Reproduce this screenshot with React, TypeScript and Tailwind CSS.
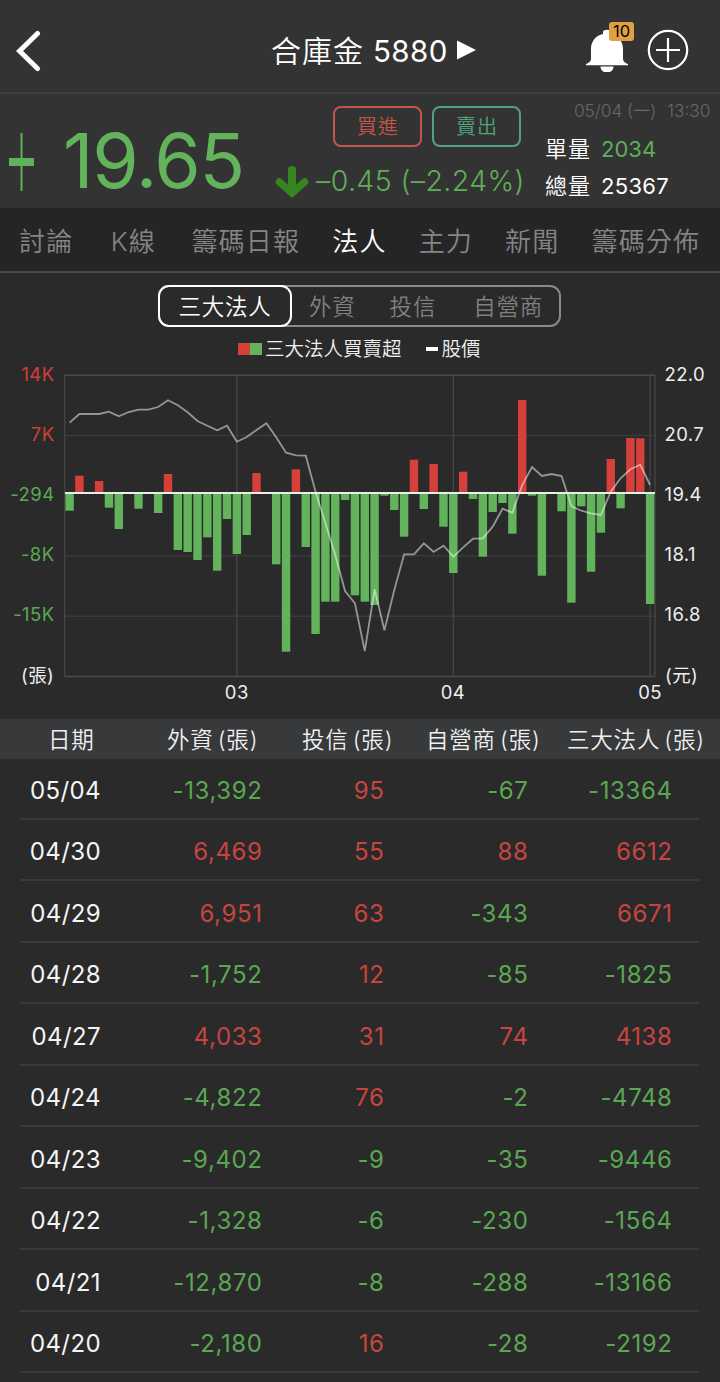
import clsx from 'clsx';

interface Row {
  date: string;
  foreign: string;
  trust: string;
  dealer: string;
  total: string;
}

const tabs = ['討論', 'K線', '籌碼日報', '法人', '主力', '新聞', '籌碼分佈'];

const rows: Row[] = [
  { date: '05/04', foreign: '-13,392', trust: '95', dealer: '-67', total: '-13364' },
  { date: '04/30', foreign: '6,469', trust: '55', dealer: '88', total: '6612' },
  { date: '04/29', foreign: '6,951', trust: '63', dealer: '-343', total: '6671' },
  { date: '04/28', foreign: '-1,752', trust: '12', dealer: '-85', total: '-1825' },
  { date: '04/27', foreign: '4,033', trust: '31', dealer: '74', total: '4138' },
  { date: '04/24', foreign: '-4,822', trust: '76', dealer: '-2', total: '-4748' },
  { date: '04/23', foreign: '-9,402', trust: '-9', dealer: '-35', total: '-9446' },
  { date: '04/22', foreign: '-1,328', trust: '-6', dealer: '-230', total: '-1564' },
  { date: '04/21', foreign: '-12,870', trust: '-8', dealer: '-288', total: '-13166' },
  { date: '04/20', foreign: '-2,180', trust: '16', dealer: '-28', total: '-2192' },
];

// bar ends, measured from the zero line: up is positive
const bars = [
  -17.7, 17.3, 0.5, 12, -14.7, -36, 0, -15.7, 0, -20, 19, -57, -59, -67, -44.3, -77.7, -26, -61, -42, 20,
  0.5, -71.3, -158.7, 23.7, -54, -141, -108.7, -108.7, -7, -102.3, -108.7, -112, -2.7, -17, -43.7, 33.3, -16, 29,
  -33.7, -80, 21.3, -6, -63.7, -19, -10, -40.7, 93, -2.7, -82.7, 0, -18.3, -109.7, -13.3, -78.7, -39.7, 34, -15.3,
  55, 54.7, -111,
];

const prices = [
  422.7, 414, 414, 414, 411.7, 416.3, 412, 409.7, 409.7, 407, 400.3, 405.3, 412.3, 421, 425.7, 430.3, 425.7, 441.7,
  437, 430, 423.3, 437.3, 452.7, 455.3, 455.7, 491.7, 523.3, 555, 591, 603.3, 651, 589.3, 630.3, 590, 554.3, 554.3,
  543.3, 552, 545.7, 556.7, 547.3, 538.7, 538.3, 526.7, 508.7, 512.7, 485, 467, 476, 474, 476, 506, 510.7, 513.3,
  515, 491.7, 478.3, 469.3, 464.7, 485,
];

const leftAxis = [
  { label: '14K', y: 380.5, color: '#d13f3a' },
  { label: '7K', y: 440.5, color: '#d13f3a' },
  { label: '-294', y: 501, color: '#5aa753' },
  { label: '-8K', y: 561, color: '#5aa753' },
  { label: '-15K', y: 621, color: '#5aa753' },
];

const rightAxis = [
  { label: '22.0', y: 380.5 },
  { label: '20.7', y: 440.5 },
  { label: '19.4', y: 501 },
  { label: '18.1', y: 561 },
  { label: '16.8', y: 621 },
];

const ZERO = 493;
const barX = (i: number) => 69.6 + i * 9.839;

function Header() {
  return (
    <header className="flex h-[94px] items-center border-b-2 border-[#3e3e3e] bg-[#333333] pt-2">
      <svg className="ml-4 mt-0.5 h-11 w-7 shrink-0" viewBox="0 0 28 44" fill="none">
        <path d="M21.5 4.5 3.5 22l18 17.5" stroke="#fff" strokeWidth="5" strokeLinecap="round" strokeLinejoin="miter" />
      </svg>
      <h1 className="ml-[227px] flex w-[310px] items-center pt-0.5 text-[30px] font-[350] whitespace-nowrap text-white">
        <span className="tracking-[1px]">合庫金</span>
        <span className="ml-[9px] text-[29.500px] font-normal tracking-[0.400px]">5880</span>
        <svg className="-mt-0.5 ml-[9px] h-5 w-5" viewBox="0 0 20 20">
          <path d="M0 0.5 19 10 0 19.5z" fill="#fff" />
        </svg>
      </h1>
      <div className="relative ml-1">
        <svg className="h-11 w-11" viewBox="0 0 44 44" fill="#fff">
          <path d="M18 4c0-3 8-3 8 0v2c7 1.500 12 7 12 15v9c0 3 1 4.500 5 6v1.300H1V36c4-1.500 5-3 5-6v-9C6 13 11 7.500 18 6z" />
          <path d="M15.500 38.500h13c0 8-13 8-13 0z" />
        </svg>
        <span className="absolute -top-[6px] left-[24px] flex h-[19px] w-[25px] items-center justify-center rounded-[3px] bg-[#e09f43] text-[16.500px] text-black">
          10
        </span>
      </div>
      <svg className="ml-[18px] h-[42px] w-[42px]" viewBox="0 0 42 42" fill="none" stroke="#fff" strokeWidth="2.2">
        <circle cx="21" cy="21" r="19.200" />
        <path d="M21 9v24M9 21h24" />
      </svg>
    </header>
  );
}

function Quote() {
  return (
    <section className="flex h-[114px] bg-[#333333]">
      <svg className="mt-[38px] ml-[9px] h-[60px] w-[26px] shrink-0" viewBox="0 0 26 60" fill="#5fb259">
        <rect x="11.500" y="1" width="2" height="58" />
        <rect y="26" width="25" height="8" />
      </svg>
      <div className="mt-[27px] ml-[28px] w-[212px] shrink-0 text-[75px] leading-[80px] font-normal tracking-[-1.200px] text-[#63b35c]">
        19.65
      </div>
      <div className="w-[270px] shrink-0">
        <div className="mt-3 ml-[58px] flex gap-[10px] text-[20px] font-[350] tracking-[1px]">
          <button className="h-[41px] w-[89px] rounded-lg border-2 border-[#c1564b] pl-px text-[#c1564b]">買進</button>
          <button className="h-[41px] w-[89px] rounded-lg border-2 border-[#4ea57b] pl-px text-[#4ea57b]">賣出</button>
        </div>
        <div className="mt-[14px] flex items-center">
          <svg className="mt-[3px] h-9 w-9 shrink-0" viewBox="0 0 36 36" fill="none" stroke="#36851f" strokeLinecap="round">
            <path d="M17 6v21" strokeWidth="8" />
            <path d="M4.500 18 17 29 29.500 18" strokeWidth="7.500" />
          </svg>
          <span className="ml-[5px] text-[28.500px] leading-8 font-[350] tracking-[0.400px] whitespace-nowrap text-[#5fae58]">
            –0.45 (–2.24%)
          </span>
        </div>
      </div>
      <div className="text-[22px] font-[350] text-white">
        <div className="mt-[5px] ml-[29px] flex gap-[11px] text-[17.200px] leading-6 whitespace-nowrap text-[#686868]">
          <span>05/04 (一)</span>
          <span>13:30</span>
        </div>
        <div className="mt-[8px] flex h-[37px] items-center">
          <span className="tracking-[1px]">單量</span>
          <span className="ml-[10px] font-normal text-[#5fae58]">2034</span>
        </div>
        <div className="flex h-[37px] items-center">
          <span className="tracking-[1px]">總量</span>
          <span className="ml-[10px] font-normal tracking-[0.300px]">25367</span>
        </div>
      </div>
    </section>
  );
}

function Tabs() {
  return (
    <nav className="flex h-[65px] items-center gap-8 border-b-2 border-[#4a4a4a] bg-[#252525] pt-[3px] pl-[19px] text-[26px] font-[350] tracking-[1.200px] text-[#858585]">
      {tabs.map((tab) => (
        <span
          key={tab}
          className={clsx(
            'shrink-0 whitespace-nowrap',
            tab === '法人' && 'text-white',
            tab === 'K線' && 'w-[54px] pl-[2px] text-center',
          )}
        >
          {tab}
        </span>
      ))}
    </nav>
  );
}

function Segments() {
  return (
    <div className="mt-3 ml-[158px] flex h-[42px] w-[403px] items-center rounded-[11px] bg-[#2a2a2a] text-[22.500px] font-[350] tracking-[0.800px] text-[#808080] ring-2 ring-[#8a8a8a] ring-inset">
      <span className="flex h-[42px] w-[134px] items-center justify-center rounded-[11px] border-2 border-white pt-px text-white">
        三大法人
      </span>
      <span className="ml-[17px] pt-px">外資</span>
      <span className="ml-[34px] pt-px">投信</span>
      <span className="ml-[37px] pt-px">自營商</span>
    </div>
  );
}

function Legend() {
  return (
    <div className="mt-2 ml-[238px] flex h-7 items-center text-[19.500px] text-[#f0f0f0]">
      <i className="h-3 w-3 bg-[#d6403b]" />
      <i className="h-3 w-3 bg-[#62b35b]" />
      <span className="ml-[3px] pt-0.5 font-[350]">三大法人買賣超</span>
      <i className="ml-6 h-1 w-3 bg-white" />
      <span className="ml-1 pt-0.5 font-[350]">股價</span>
    </div>
  );
}

function Chart() {
  const points = prices.map((y, i) => `${barX(i)},${y}`).join(' ');

  return (
    <svg className="block h-[356px] w-full" viewBox="0 363 720 356">
      <g stroke="#434343" strokeWidth="1.5">
        {[375.2, 435.5, 555.8, 616.2, 676.5].map((y, i) => (
          <path key={y} d={`M64.700 ${y}H655`} stroke={i === 0 || i === 4 ? '#4b4b4b' : '#3a3a3a'} />
        ))}
        {[64.7, 236.8, 453.3, 650, 655].map((x) => (
          <path key={x} d={`M${x} 375V676.500`} />
        ))}
      </g>
      {bars.map((v, i) => (
        <rect
          key={i}
          x={barX(i) - 4.2}
          y={v > 0 ? ZERO - v : ZERO}
          width="8.4"
          height={Math.abs(v)}
          fill={v > 0 ? '#d6403b' : '#62b35b'}
        />
      ))}
      <path d={`M65 ${ZERO}H655`} stroke="#e8f0e6" strokeWidth="1.8" />
      <polyline points={points} fill="none" stroke="#fff" strokeOpacity="0.5" strokeWidth="1.8" />
      <g fontSize="18.5" letterSpacing="0.4">
        {leftAxis.map((a) => (
          <text key={a.label} x="54.500" y={a.y} textAnchor="end" fill={a.color}>
            {a.label}
          </text>
        ))}
        {rightAxis.map((a) => (
          <text key={a.label} x="664.500" y={a.y} fill="#eeeeee">
            {a.label}
          </text>
        ))}
        <g fill="#eeeeee">
          <text x="21" y="682">(張)</text>
          <text x="665" y="682">(元)</text>
          <g textAnchor="middle">
            <text x="236.800" y="699">03</text>
            <text x="453" y="699">04</text>
            <text x="650" y="699">05</text>
          </g>
        </g>
      </g>
    </svg>
  );
}

function Cell({ value, className }: { value: string; className: string }) {
  return (
    <span className={clsx('text-right', className, value.startsWith('-') ? 'text-[#5aa753]' : 'text-[#c94440]')}>
      {value}
    </span>
  );
}

function Table() {
  return (
    <section>
      <div className="flex h-10 items-center bg-[#38393b] pt-0.5 text-[22.500px] font-[350] tracking-[0.800px] whitespace-nowrap text-[#f0f0f0]">
        <span className="ml-[48px] w-[119px]">日期</span>
        <span className="w-[135px] [word-spacing:-3px]">外資 (張)</span>
        <span className="w-[124px] [word-spacing:-3px]">投信 (張)</span>
        <span className="w-[141px] [word-spacing:-3px]">自營商 (張)</span>
        <span className="[word-spacing:-3px]">三大法人 (張)</span>
      </div>
      <div className="-mt-px">
        {rows.map((row) => (
          <div
            key={row.date}
            className="mr-[21px] ml-5 flex h-[61.500px] items-center border-b-2 border-[#3a3a3a] pt-[6px] text-[24px] tracking-[0.600px]"
          >
            <span className="w-[81px] text-right tracking-[0.400px] text-[#f5f5f5]">{row.date}</span>
            <Cell value={row.foreign} className="w-[161.500px]" />
            <Cell value={row.trust} className="w-[122px]" />
            <Cell value={row.dealer} className="w-[144px]" />
            <Cell value={row.total} className="w-[144px]" />
          </div>
        ))}
      </div>
    </section>
  );
}

export default function App() {
  return (
    <main className="h-[1382px] w-[720px] overflow-hidden bg-[#2a2a2a] font-['Inter','Noto_Sans_CJK_TC',sans-serif] antialiased">
      <Header />
      <Quote />
      <Tabs />
      <Segments />
      <Legend />
      <Chart />
      <Table />
    </main>
  );
}
